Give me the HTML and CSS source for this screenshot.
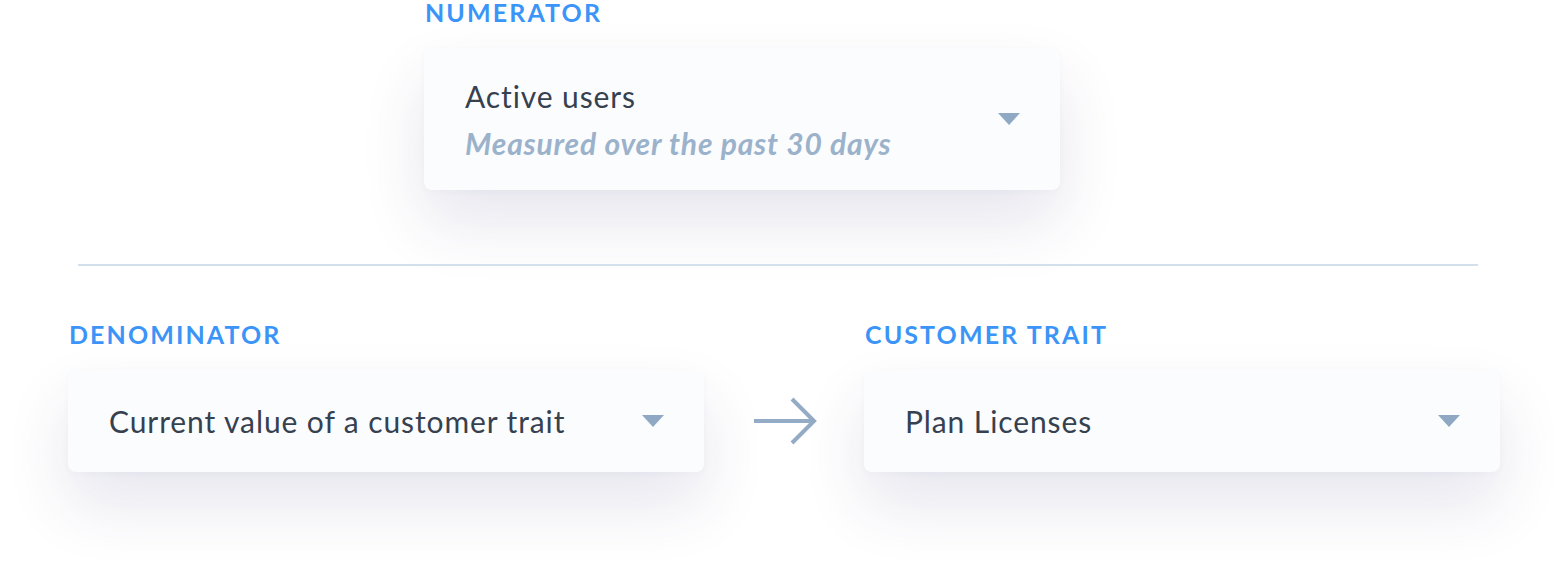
FILE: index.html
```html
<!DOCTYPE html>
<html lang="en">
<head>
<meta charset="utf-8">
<title>Ratio metric</title>
<link rel="stylesheet" href="styles.css">
</head>
<body>
  <main class="metric">
    <section class="field field--numerator">
      <div class="field__label">NUMERATOR</div>
      <div class="select select--tall">
        <div class="select__text">
          <div class="select__value">Active users</div>
          <div class="select__hint">Measured over the past 30 days</div>
        </div>
        <span class="select__caret"></span>
      </div>
    </section>

    <hr class="divider">

    <section class="row">
      <div class="field">
        <div class="field__label">DENOMINATOR</div>
        <div class="select">
          <div class="select__value">Current value of a customer trait</div>
          <span class="select__caret"></span>
        </div>
      </div>

      <div class="row__arrow">
        <svg width="64" height="48" viewBox="0 0 64 48" aria-hidden="true">
          <path d="M1 24 H60 M39 2 L61 24 L39 46" fill="none" stroke="#93abc5" stroke-width="4"/>
        </svg>
      </div>

      <div class="field">
        <div class="field__label">CUSTOMER TRAIT</div>
        <div class="select">
          <div class="select__value">Plan Licenses</div>
          <span class="select__caret"></span>
        </div>
      </div>
    </section>
  </main>
</body>
</html>
```

FILE: styles.css
```css
* {
  box-sizing: border-box;
}

html, body {
  margin: 0;
  background: #ffffff;
}

body {
  min-height: 580px;
  font-family: "Lato", "Noto Sans", sans-serif;
  color: #36414f;
}

.metric {
  width: 1568px;
  min-height: 580px;
  padding: 0 68px 0 68px;
}

.field {
  width: 636px;
}

.field--numerator {
  margin-left: 356px;
}

.field__label {
  font-size: 25px;
  line-height: 25px;
  font-weight: 700;
  color: #3b94f7;
  letter-spacing: 2.1px;
  margin-left: 1px;
  margin-bottom: 23px;
}

.select {
  height: 102px;
  border-radius: 8px;
  background: #fbfcfe;
  box-shadow: 0 32px 64px rgba(48, 52, 112, 0.12), 0 2px 6px rgba(48, 52, 112, 0.03);
  display: flex;
  align-items: center;
  justify-content: space-between;
  padding: 0 40px 0 41px;
}

.select--tall {
  height: 142px;
}

.select__text {
  display: flex;
  flex-direction: column;
  gap: 11px;
}

.select__value {
  font-size: 30px;
  line-height: 36px;
  font-weight: 400;
  letter-spacing: 0.9px;
  color: #36414f;
}

.select__hint {
  font-size: 30px;
  line-height: 36px;
  font-weight: 700;
  font-style: italic;
  letter-spacing: 0.8px;
  color: #9bb2cb;
}

.select__caret {
  width: 0;
  height: 0;
  border-left: 11.5px solid transparent;
  border-right: 11.5px solid transparent;
  border-top: 12px solid #8fa9c4;
  flex-shrink: 0;
}

.divider {
  margin: 74px 22px 0 10px;
  border: 0;
  height: 2px;
  background: #d3dfea;
}

.row {
  display: flex;
  align-items: flex-end;
  margin-top: 56px;
}

.row__arrow {
  width: 160px;
  height: 102px;
  display: flex;
  align-items: center;
  justify-content: center;
  padding-left: 2px;
}
```
